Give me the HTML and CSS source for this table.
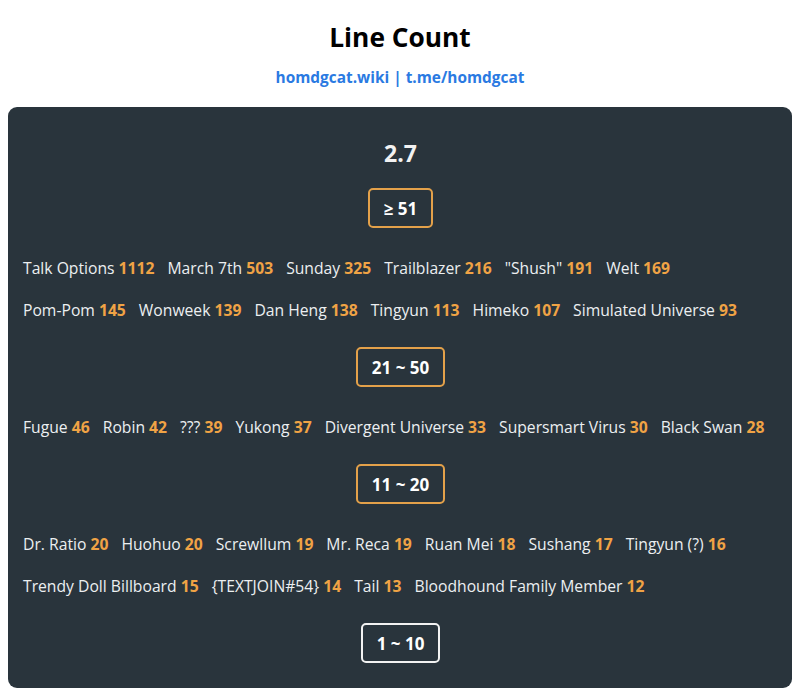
FILE: index.html
```html
<!DOCTYPE html>
<html>
<head>
<meta charset="utf-8">
<link rel="stylesheet" href="styles.css">
</head>
<body>
<header class="head">
  <h1 class="title">Line Count</h1>
  <div class="links"><a href="#">homdgcat.wiki</a> | <a href="#">t.me/homdgcat</a></div>
</header>
<main class="panel">
  <div class="version">2.7</div>

  <div class="badge">≥ 51</div>
  <div class="rows">
    <div class="row">
      <span class="item">Talk Options <b>1112</b></span>
      <span class="item">March 7th <b>503</b></span>
      <span class="item">Sunday <b>325</b></span>
      <span class="item">Trailblazer <b>216</b></span>
      <span class="item">"Shush" <b>191</b></span>
      <span class="item">Welt <b>169</b></span>
    </div>
    <div class="row">
      <span class="item">Pom-Pom <b>145</b></span>
      <span class="item">Wonweek <b>139</b></span>
      <span class="item">Dan Heng <b>138</b></span>
      <span class="item">Tingyun <b>113</b></span>
      <span class="item">Himeko <b>107</b></span>
      <span class="item">Simulated Universe <b>93</b></span>
    </div>
  </div>

  <div class="badge">21 ~ 50</div>
  <div class="rows">
    <div class="row">
      <span class="item">Fugue <b>46</b></span>
      <span class="item">Robin <b>42</b></span>
      <span class="item">??? <b>39</b></span>
      <span class="item">Yukong <b>37</b></span>
      <span class="item">Divergent Universe <b>33</b></span>
      <span class="item">Supersmart Virus <b>30</b></span>
      <span class="item">Black Swan <b>28</b></span>
    </div>
  </div>

  <div class="badge">11 ~ 20</div>
  <div class="rows">
    <div class="row">
      <span class="item">Dr. Ratio <b>20</b></span>
      <span class="item">Huohuo <b>20</b></span>
      <span class="item">Screwllum <b>19</b></span>
      <span class="item">Mr. Reca <b>19</b></span>
      <span class="item">Ruan Mei <b>18</b></span>
      <span class="item">Sushang <b>17</b></span>
      <span class="item">Tingyun (?) <b>16</b></span>
    </div>
    <div class="row">
      <span class="item">Trendy Doll Billboard <b>15</b></span>
      <span class="item">{TEXTJOIN#54} <b>14</b></span>
      <span class="item">Tail <b>13</b></span>
      <span class="item">Bloodhound Family Member <b>12</b></span>
    </div>
  </div>

  <div class="badge badge-white">1 ~ 10</div>
</main>
</body>
</html>
```

FILE: styles.css
```css
html, body {
  margin: 0;
  padding: 0;
  background: #ffffff;
}
body {
  padding: 0 8px;
  font-family: "Open Sans", "Noto Sans", sans-serif;
}
.head {
  text-align: center;
  padding-top: 19px;
}
.title {
  margin: 0;
  font-size: 26.3px;
  line-height: 36px;
  font-weight: 700;
  color: #000;
}
.links {
  margin-top: 12px;
  font-size: 15.4px;
  line-height: 22px;
  font-weight: 700;
  color: #2a7ae2;
}
.links a {
  color: #2a7ae2;
  text-decoration: none;
}
.panel {
  margin-top: 18px;
  background: #29343c;
  border-radius: 9px;
  padding: 30px 14px 25px 15px;
  display: flex;
  flex-direction: column;
  align-items: center;
  color: #eceff1;
}
.version {
  font-size: 23px;
  line-height: 32px;
  font-weight: 700;
  color: #f2f2f2;
}
.badge {
  margin-top: 19px;
  height: 40px;
  box-sizing: border-box;
  padding: 0 14px;
  border: 2px solid #e3a14a;
  border-radius: 5px;
  display: flex;
  align-items: center;
  font-size: 17px;
  font-weight: 700;
  color: #ffffff;
}
.badge-white {
  border-color: #f2f2f2;
}
.rows {
  align-self: stretch;
  margin: 19px 0 -3px;
}
.row {
  display: flex;
  flex-wrap: wrap;
  column-gap: 13px;
  height: 42px;
  align-items: center;
  font-size: 15.7px;
  color: #eceff1;
}
.item b {
  color: #f0a345;
  font-weight: 700;
}
```
